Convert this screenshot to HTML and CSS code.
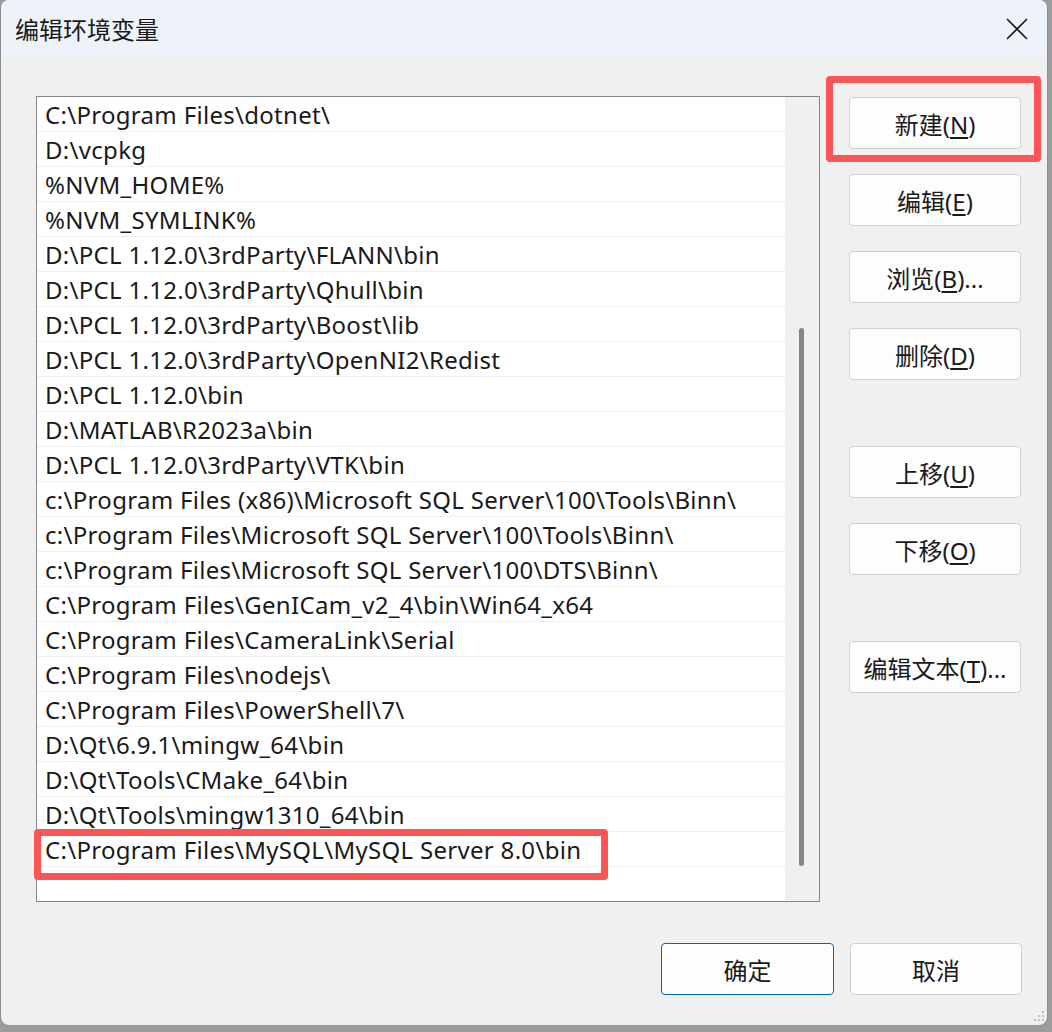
FILE: index.html
```html
<!DOCTYPE html>
<html lang="zh-CN">
<head>
    <meta charset="UTF-8">
    <meta name="viewport" content="width=device-width, initial-scale=1.0">
    <title>编辑环境变量</title>
    <link rel="stylesheet" href="styles.css">
</head>
<body>
    <div class="window">
        <div class="title-bar">
            <span class="title">编辑环境变量</span>
            <svg class="close" width="22" height="22" viewBox="0 0 22 22">
                <path d="M1 1 L21 21 M21 1 L1 21" stroke="#1a1a1a" stroke-width="1.6" fill="none"/>
            </svg>
        </div>

        <div class="content">
            <div class="main">
                <div class="list">
                    <div class="rows">
                        <div class="row">C:\Program Files\dotnet\</div>
                        <div class="row">D:\vcpkg</div>
                        <div class="row">%NVM_HOME%</div>
                        <div class="row">%NVM_SYMLINK%</div>
                        <div class="row">D:\PCL 1.12.0\3rdParty\FLANN\bin</div>
                        <div class="row">D:\PCL 1.12.0\3rdParty\Qhull\bin</div>
                        <div class="row">D:\PCL 1.12.0\3rdParty\Boost\lib</div>
                        <div class="row">D:\PCL 1.12.0\3rdParty\OpenNI2\Redist</div>
                        <div class="row">D:\PCL 1.12.0\bin</div>
                        <div class="row">D:\MATLAB\R2023a\bin</div>
                        <div class="row">D:\PCL 1.12.0\3rdParty\VTK\bin</div>
                        <div class="row">c:\Program Files (x86)\Microsoft SQL Server\100\Tools\Binn\</div>
                        <div class="row">c:\Program Files\Microsoft SQL Server\100\Tools\Binn\</div>
                        <div class="row">c:\Program Files\Microsoft SQL Server\100\DTS\Binn\</div>
                        <div class="row">C:\Program Files\GenICam_v2_4\bin\Win64_x64</div>
                        <div class="row">C:\Program Files\CameraLink\Serial</div>
                        <div class="row">C:\Program Files\nodejs\</div>
                        <div class="row">C:\Program Files\PowerShell\7\</div>
                        <div class="row">D:\Qt\6.9.1\mingw_64\bin</div>
                        <div class="row">D:\Qt\Tools\CMake_64\bin</div>
                        <div class="row">D:\Qt\Tools\mingw1310_64\bin</div>
                        <div class="row">C:\Program Files\MySQL\MySQL Server 8.0\bin</div>
                    </div>
                    <div class="scrollbar">
                        <div class="thumb"></div>
                    </div>
                </div>

                <div class="actions">
                    <button>新建(<u>N</u>)</button>
                    <button>编辑(<u>E</u>)</button>
                    <button>浏览(<u>B</u>)...</button>
                    <button>删除(<u>D</u>)</button>
                    <button class="spaced">上移(<u>U</u>)</button>
                    <button>下移(<u>O</u>)</button>
                    <button class="spaced">编辑文本(<u>T</u>)...</button>
                </div>
            </div>

            <div class="footer">
                <button class="default">确定</button>
                <button>取消</button>
            </div>
        </div>

        <!-- red markers drawn over the dialog -->
        <div class="mark mark-new"></div>
        <div class="mark mark-row"></div>

        <svg class="grip" width="12" height="12" viewBox="0 0 12 12">
            <rect x="9" y="1" width="2" height="2"/>
            <rect x="5" y="5" width="2" height="2"/>
            <rect x="9" y="5" width="2" height="2"/>
            <rect x="1" y="9" width="2" height="2"/>
            <rect x="5" y="9" width="2" height="2"/>
            <rect x="9" y="9" width="2" height="2"/>
        </svg>
    </div>
</body>
</html>
```

FILE: styles.css
```css
body {
    margin: 0;
    background: #9c9c9c;
    font-family: "Noto Sans", "Noto Sans CJK SC", sans-serif;
    color: #1a1a1a;
}
.window {
    position: relative;
    width: 1046px;
    height: 1025px;
    margin-left: 1px;
    background: #f0f0f0;
    border-radius: 8px;
    box-shadow: 0 0 0 1px #8e8e8e;
    overflow: hidden;
}
.title-bar {
    height: 57px;
    background: #eef3f9;
    display: flex;
    align-items: center;
    justify-content: space-between;
    padding-left: 14px;
}
.title {
    font-size: 24px;
}
.close {
    margin-right: 19px;
}
.content {
    padding: 39px 25px 0 35px;
}
.main {
    display: flex;
    gap: 29px;
}
.list {
    width: 782px;
    height: 804px;
    border: 1px solid #858585;
    background: #fff;
    display: flex;
}
.rows {
    flex: 1;
}
.row {
    height: 34px;
    line-height: 36px;
    border-bottom: 1px solid #efefef;
    padding-left: 8px;
    font-size: 24px;
    letter-spacing: 0.3px;
    white-space: nowrap;
}
.scrollbar {
    width: 34px;
    background: #f0f0f0;
    padding-top: 231px;
}
.thumb {
    width: 5px;
    height: 538px;
    margin-left: 14px;
    background: #858585;
    border-radius: 3px;
}
.actions {
    width: 172px;
    padding-top: 1px;
    display: flex;
    flex-direction: column;
    gap: 25px;
}
button {
    height: 52px;
    border: 1px solid #d0d0d0;
    border-radius: 4px;
    background: #fdfdfd;
    font-family: inherit;
    font-size: 24px;
    color: #1a1a1a;
    padding: 0;
}
button u {
    text-underline-offset: 3px;
}
.actions .spaced {
    margin-top: 41px;
}
.footer {
    display: flex;
    justify-content: flex-end;
    gap: 16px;
    margin-top: 41px;
}
.footer button {
    width: 172px;
}
.footer .default {
    width: 173px;
    border-color: #0067c0;
}
.mark {
    position: absolute;
    border: 7px solid #fb5555;
    border-radius: 4px;
}
.mark-new {
    left: 825px;
    top: 76px;
    width: 201px;
    height: 72px;
}
.mark-row {
    left: 33px;
    top: 829px;
    width: 560px;
    height: 37px;
}
.grip {
    position: absolute;
    right: 2px;
    bottom: 3px;
    fill: #c2c2c2;
}
```
